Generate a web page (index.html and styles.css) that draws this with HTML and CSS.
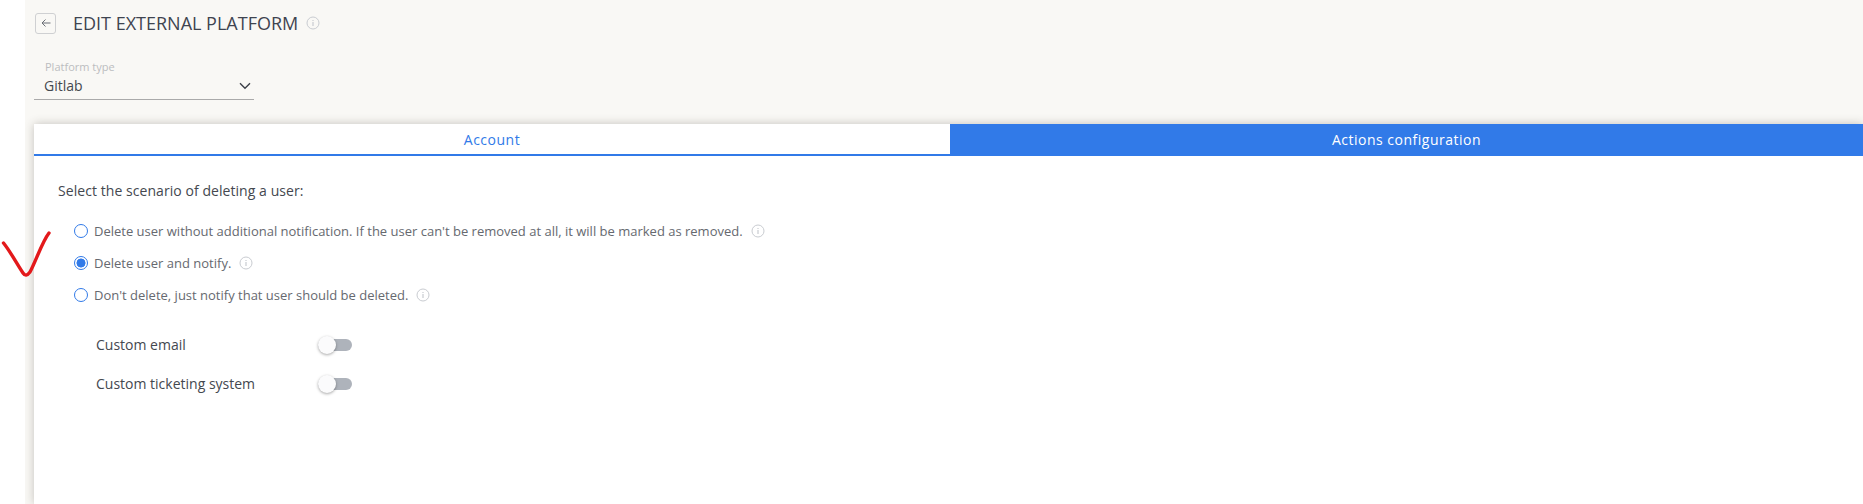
FILE: index.html
```html
<!DOCTYPE html>
<html lang="en">
<head>
<meta charset="utf-8">
<title>Edit external platform</title>
<link rel="stylesheet" href="styles.css">
</head>
<body>
<div class="gutter"></div>
<main class="main">
  <header class="head">
    <button class="back" type="button" aria-label="Back">
      <svg width="12" height="12" viewBox="0 0 12 12"><path d="M10.500 6H2M5.500 2.500 2 6l3.500 3.500" fill="none" stroke="#6b6f76" stroke-width="1"/></svg>
    </button>
    <h1 class="title">EDIT EXTERNAL PLATFORM</h1>
    <svg class="info info-title" viewBox="0 0 14 14"><circle cx="7" cy="7" r="6" fill="none" stroke="#c9ccd1" stroke-width="1"/><path d="M7 6v4M7 4v1" stroke="#c9ccd1" stroke-width="1.200"/></svg>
  </header>
  <div class="select">
    <div class="select-label">Platform type</div>
    <div class="select-row">
      <span>Gitlab</span>
      <svg width="12" height="8" viewBox="0 0 12 8"><path d="M1 1.200 6 6.200l5-5" fill="none" stroke="#3c4048" stroke-width="1.400"/></svg>
    </div>
  </div>
  <section class="card">
    <div class="tabs">
      <div class="tab tab-account">Account</div>
      <div class="tab tab-actions">Actions configuration</div>
    </div>
    <div class="body">
      <p class="prompt">Select the scenario of deleting a user:</p>
      <div class="radios">
        <div class="radio-row">
          <span class="radio"></span>
          <span class="radio-text">Delete user without additional notification. If the user can't be removed at all, it will be marked as removed.</span>
          <svg class="info" viewBox="0 0 14 14"><circle cx="7" cy="7" r="6" fill="none" stroke="#c9ccd1" stroke-width="1"/><path d="M7 6v4M7 4v1" stroke="#c9ccd1" stroke-width="1.200"/></svg>
        </div>
        <div class="radio-row">
          <span class="radio radio-on"></span>
          <span class="radio-text">Delete user and notify.</span>
          <svg class="info" viewBox="0 0 14 14"><circle cx="7" cy="7" r="6" fill="none" stroke="#c9ccd1" stroke-width="1"/><path d="M7 6v4M7 4v1" stroke="#c9ccd1" stroke-width="1.200"/></svg>
        </div>
        <div class="radio-row">
          <span class="radio"></span>
          <span class="radio-text">Don't delete, just notify that user should be deleted.</span>
          <svg class="info" viewBox="0 0 14 14"><circle cx="7" cy="7" r="6" fill="none" stroke="#c9ccd1" stroke-width="1"/><path d="M7 6v4M7 4v1" stroke="#c9ccd1" stroke-width="1.200"/></svg>
        </div>
      </div>
      <div class="toggles">
        <div class="toggle-row"><span class="toggle-label">Custom email</span><span class="toggle"><span class="knob"></span></span></div>
        <div class="toggle-row"><span class="toggle-label">Custom ticketing system</span><span class="toggle"><span class="knob"></span></span></div>
      </div>
    </div>
  </section>
</main>
<svg class="mark" width="56" height="50" viewBox="0 0 56 50"><path d="M2.500 12C9 20 16 33 22 42C24 45 26 45 29 41C35 30 41 11 48 2" fill="none" stroke="#e3191b" stroke-width="3.400" stroke-linecap="round" stroke-linejoin="round"/></svg>
</body>
</html>
```

FILE: styles.css
```css
* { box-sizing: border-box; }
html, body { height: 100%; }
body {
  margin: 0;
  display: flex;
  height: 504px;
  overflow: hidden;
  background: #fff;
  font-family: "Open Sans", "Noto Sans", sans-serif;
  color: #44484f;
}
.gutter { width: 25px; flex: none; }
.main {
  flex: 1;
  min-width: 0;
  display: flex;
  flex-direction: column;
  background: #f9f8f5;
  overflow: hidden;
}
.head {
  display: flex;
  align-items: center;
  height: 24px;
  margin: 11px 0 0 10px;
}
.back {
  width: 21px;
  height: 21px;
  padding: 0;
  display: flex;
  align-items: center;
  justify-content: center;
  background: #f9f8f5;
  border: 1px solid #cfd0d2;
  border-radius: 3px;
}
.title {
  margin: 0 0 0 17px;
  font-size: 18px;
  line-height: 24px;
  font-weight: 400;
  color: #3f4450;
}
.info { width: 14px; height: 14px; flex: none; margin-left: 8px; }
.select {
  width: 220px;
  margin: 25px 0 0 9px;
  border-bottom: 1px solid #aaaaaa;
}
.select-label {
  padding-left: 11px;
  font-size: 11px;
  line-height: 14px;
  color: #bcbdc0;
}
.select-row {
  display: flex;
  align-items: center;
  justify-content: space-between;
  height: 25px;
  padding: 1px 3px 3px 10px;
  font-size: 14px;
  line-height: 18px;
  color: #44484f;
}
.card {
  flex: 1;
  margin: 24px 0 0 9px;
  background: #fff;
  box-shadow: 0 0 9px rgba(60, 55, 40, 0.28);
}
.tabs {
  display: flex;
  height: 32px;
  font-size: 14px;
  line-height: 30px;
  text-align: center;
}
.tab { padding-top: 1px; }
.tab-account {
  width: 916px;
  color: #317ae8;
  letter-spacing: 0.5px;
  border-bottom: 2px solid #317ae8;
}
.tab-actions {
  flex: 1;
  background: #317ae8;
  color: #fff;
  letter-spacing: 0.5px;
}
.body { padding: 25px 0 0 24px; }
.prompt {
  margin: 0;
  font-size: 14px;
  line-height: 19px;
  letter-spacing: 0.06px;
  color: #44484f;
}
.radios {
  display: flex;
  flex-direction: column;
  gap: 12px;
  margin: 21px 0 0 16px;
}
.radio-row {
  display: flex;
  align-items: center;
  height: 20px;
}
.radio {
  width: 14px;
  height: 14px;
  flex: none;
  border: 1.500px solid #317ae8;
  border-radius: 50%;
  background: #fff;
}
.radio-on {
  background: radial-gradient(circle, #317ae8 0 4.200px, #fff 4.800px);
}
.radio-text {
  margin-left: 6px;
  font-size: 13px;
  line-height: 18px;
  color: #66696f;
}
.toggles {
  display: flex;
  flex-direction: column;
  gap: 19px;
  margin: 30px 0 0 38px;
}
.toggle-row {
  display: flex;
  align-items: center;
  height: 20px;
}
.toggle-label {
  width: 222px;
  font-size: 14px;
  line-height: 20px;
  color: #44484f;
}
.toggle {
  position: relative;
  width: 34px;
  height: 12px;
  background: #aeb3bb;
  border-radius: 6px;
}
.knob {
  position: absolute;
  left: 0;
  top: -3px;
  width: 18px;
  height: 18px;
  background: #fbfbfc;
  border-radius: 50%;
  box-shadow: 0 1px 3px rgba(0, 0, 0, 0.35);
}
.mark {
  position: absolute;
  left: 1px;
  top: 231px;
}
```
